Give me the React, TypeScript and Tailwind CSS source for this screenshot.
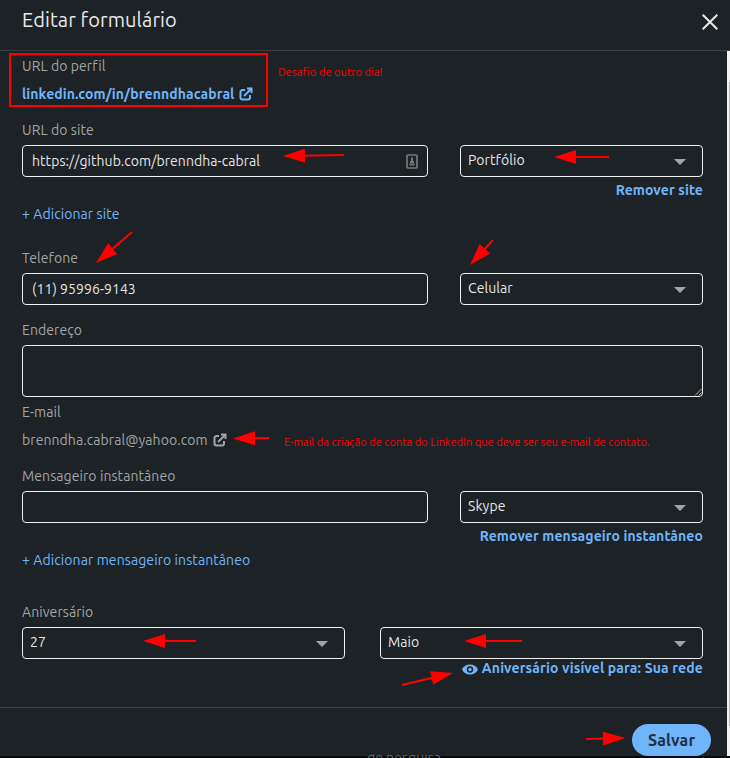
import type { ReactNode } from "react";

const Label = ({ children, className = "" }: { children: ReactNode; className?: string }) => (
  <div className={`h-5 whitespace-nowrap text-[14px] leading-5 tracking-[0.08px] text-[#a2a4a5] ${className}`}>{children}</div>
);

const Select = ({ children, className = "" }: { children: ReactNode; className?: string }) => (
  <button className={`flex h-8 items-center justify-between rounded-[4px] border border-[#f0f0f0] pl-[7px] pr-4 text-[14px] tracking-[0.08px] text-[#e6e6e7] ${className}`}>
    <span className="-mt-0.5 whitespace-nowrap leading-5">{children}</span>
    <svg className="mt-0.5 h-[6px] w-3" viewBox="0 0 12 6" fill="#a2a4a5"><path d="M0 0h12L6 6z" /></svg>
  </button>
);

const Field = ({ children, className = "" }: { children?: ReactNode; className?: string }) => (
  <div className={`flex h-8 w-[406px] items-center justify-between rounded-[4px] border border-[#f0f0f0] pl-[9px] pr-[9px] text-[14px] leading-5 tracking-[0.06px] text-[#e6e6e7] ${className}`}>
    {children}
  </div>
);

const External = () => (
  <svg className="h-[14px] w-[14px]" viewBox="0 0 14 14" fill="none" stroke="currentColor" strokeWidth="2">
    <path d="M6 3H3.500A2 2 0 0 0 1.500 5V10.500A2 2 0 0 0 3.500 12.500H9A2 2 0 0 0 11 10.500V8" />
    <path d="M8 1.500h4.500V6M12.500 1.500L5 9" />
  </svg>
);

const Arrow = ({ x1, y1, x2, y2 }: { x1: number; y1: number; x2: number; y2: number }) => {
  const length = Math.hypot(x2 - x1, y2 - y1);
  const angle = (Math.atan2(y2 - y1, x2 - x1) * 180) / Math.PI;
  return (
    <g transform={`translate(${x2} ${y2}) rotate(${angle})`}>
      <path d={`M${-length} 0H-20`} stroke="#ff0000" strokeWidth="2" />
      <path d="M0 0L-22 -7V7z" fill="#ff0000" />
    </g>
  );
};

export default function App() {
  return (
    <div className="relative flex h-[758px] w-[730px] flex-col overflow-hidden bg-[#1d2226] font-['Ubuntu','Noto_Sans',sans-serif]">
      <header className="flex h-[51px] shrink-0 items-start justify-between border-b border-[#3c4043] pl-[22px] pr-3">
        <h1 className="mt-[5px] whitespace-nowrap text-[20px] leading-[30px] tracking-[0.1px] text-[#e8e8e8]">Editar formulário</h1>
        <svg className="mt-[14px] h-4 w-4" viewBox="0 0 16 16" stroke="#e8e8e8" strokeWidth="2"><path d="M.7.700l14.600 14.600M15.300.700L.700 15.300" /></svg>
      </header>

      <div className="flex h-[705px] shrink-0">
        <div className="flex min-w-0 flex-1 flex-col">
          <main className="h-[656px] shrink-0 pl-[22px] pr-6 pt-[5px]">
            <Label>URL do perfil</Label>
            <div className="mt-2 flex h-5 items-center gap-[5px] text-[14px] font-bold leading-5 text-[#70b5f9]">
              <span className="tracking-[0.1px]">linkedin.com/in/brenndhacabral</span><External />
            </div>
            <Label className="mt-4">URL do site</Label>
            <div className="mt-[5px] flex justify-between">
              <Field>
                <span>https://github.com/brenndha-cabral</span>
                <svg className="h-[15px] w-3" viewBox="0 0 12 15" fill="none">
                  <rect x="1" y="1" width="10" height="13" rx="1" stroke="#777" strokeWidth="1.700" />
                  <path d="M6 3.500v4M4 8h4M3.500 10.500h5" stroke="#777" strokeWidth="2" />
                </svg>
              </Field>
              <Select className="w-[243px]">Portfólio</Select>
            </div>
            <div className="mt-[3px] h-5 text-right text-[14px] font-bold leading-5 tracking-[0.1px] text-[#70b5f9]">Remover site</div>
            <div className="mt-1 h-5 text-[14px] leading-5 tracking-[0.08px] text-[#70b5f9]">+ Adicionar site</div>
            <Label className="mt-6">Telefone</Label>
            <div className="mt-[5px] flex justify-between">
              <Field><span>(11) 95996-9143</span></Field>
              <Select className="w-[243px]">Celular</Select>
            </div>
            <Label className="mt-[15px]">Endereço</Label>
            <div className="mt-[5px] flex h-[52px] items-end justify-end rounded-[4px] border border-[#f0f0f0]">
              <svg className="h-2 w-2" viewBox="0 0 8 8" stroke="#b0b0b0"><path d="M1 7.500L7.500 1M4.500 7.500L7.500 4.500" /></svg>
            </div>
            <Label className="mt-[5px]">E-mail</Label>
            <div className="mt-2 flex h-5 items-center gap-[5px] text-[14px] leading-5 tracking-[0.08px] text-[#a2a4a5]">
              <span>brenndha.cabral@yahoo.com</span><External />
            </div>
            <Label className="mt-4">Mensageiro instantâneo</Label>
            <div className="mt-[5px] flex justify-between">
              <Field />
              <Select className="w-[243px]">Skype</Select>
            </div>
            <div className="mt-[3px] h-5 text-right text-[14px] font-bold leading-5 tracking-[0.1px] text-[#70b5f9]">Remover mensageiro instantâneo</div>
            <div className="mt-1 h-5 text-[14px] leading-5 tracking-[0.09px] text-[#70b5f9]">+ Adicionar mensageiro instantâneo</div>
            <Label className="mt-8">Aniversário</Label>
            <div className="mt-[5px] flex justify-between">
              <Select className="w-[323px]">27</Select>
              <Select className="w-[323px]">Maio</Select>
            </div>
            <div className="-mt-px flex h-5 items-center justify-end gap-1 text-[14px] font-bold leading-5 text-[#70b5f9]">
              <svg className="mt-0.5 h-[11px] w-4" viewBox="0 0 16 11">
                <path d="M0 5.500C1.500 2.200 4.500.5 8 .5s6.500 1.700 8 5c-1.500 3.300-4.500 5-8 5s-6.500-1.700-8-5z" fill="#70b5f9" />
                <circle cx="8" cy="5.500" r="3.200" fill="#1d2226" /><circle cx="8" cy="5.500" r="1.700" fill="#70b5f9" />
              </svg>
              <span className="tracking-[0.14px]">Aniversário visível para: Sua rede</span>
            </div>
          </main>
          <footer className="flex flex-1 items-start justify-end border-t border-[#3c4043] pr-4 pt-4">
            <button className="h-8 w-[79px] rounded-full bg-[#70b5f9] text-[16px] font-bold leading-8 tracking-[0.15px] text-[#1d2f42]">Salvar</button>
          </footer>
        </div>
        <div className="flex w-[3px] justify-end bg-[#f1f1f1] pt-[31px]"><div className="h-[644px] w-px bg-[#b8b8b8]" /></div>
      </div>
      <div className="h-0.5 shrink-0 bg-[#08090a]" />
      <div className="absolute left-[367px] top-[754px] h-1 overflow-hidden whitespace-nowrap text-[14px] leading-5 text-[#626668]">
        <div className="-mt-[6px]">de pesquisa</div>
      </div>

      <div className="absolute left-[9px] top-[53px] h-[54px] w-[259px] border-2 border-[#ff0000]" />
      <div className="absolute left-[278px] top-[64px] whitespace-nowrap text-[11px] leading-4 tracking-[0.05px] text-[#ff0000]">Desafio de outro dia!</div>
      <div className="absolute left-[284px] top-[434px] whitespace-nowrap text-[11px] leading-4 tracking-[0.04px] text-[#ff0000]">E-mail da criação de conta do LinkedIn que deve ser seu e-mail de contato.</div>
      <svg className="absolute inset-0 h-[758px] w-[730px]" viewBox="0 0 730 758">
        <Arrow x1={344} y1={155} x2={283} y2={156} />
        <Arrow x1={609} y1={157} x2={554} y2={157} />
        <Arrow x1={132} y1={232} x2={96} y2={263} />
        <Arrow x1={493} y1={240} x2={470} y2={265} />
        <Arrow x1={269} y1={438} x2={233} y2={438.500} />
        <Arrow x1={196} y1={641} x2={143} y2={641} />
        <Arrow x1={522} y1={641} x2={464} y2={641} />
        <Arrow x1={402} y1={685} x2={453} y2={673} />
        <Arrow x1={586} y1={739} x2={625} y2={738} />
      </svg>
    </div>
  );
}
